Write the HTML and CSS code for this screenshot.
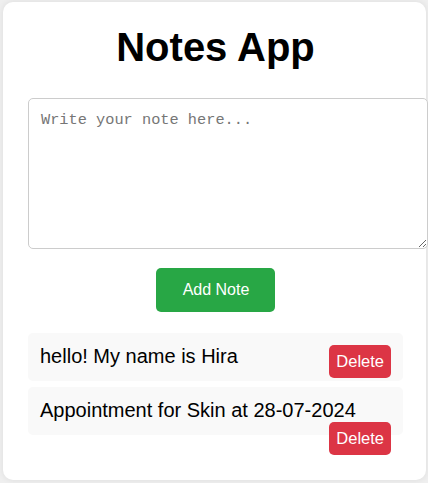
FILE: index.html
```html
<!DOCTYPE html>
<html lang="en">
<head>
<meta charset="utf-8">
<title>Notes App</title>
<link rel="stylesheet" href="styles.css">
</head>
<body>
<div class="container">
  <h1 class="title">Notes App</h1>
  <textarea class="note-input" placeholder="Write your note here..."></textarea>
  <div class="actions">
    <button class="add-btn">Add Note</button>
  </div>
  <div class="notes">
    <div class="note"><span class="note-text">hello! My name is Hira</span><button class="delete-btn">Delete</button></div>
    <div class="note"><span class="note-text">Appointment for Skin at 28-07-2024</span><button class="delete-btn">Delete</button></div>
  </div>
</div>
</body>
</html>
```

FILE: styles.css
```css
html, body {
  margin: 0;
  overflow: hidden;
}
body {
  background: #efefef;
  padding: 2px 2px 3px 3px;
  font-family: "Liberation Sans", Arial, sans-serif;
  color: #000;
}
.container {
  display: flow-root;
  background: #fff;
  border-radius: 10px;
  box-shadow: 0 0 6px rgba(0, 0, 0, 0.08);
  padding: 22px 23px 25px 25px;
}
.title {
  margin: 0 0 28px;
  text-align: center;
  font-size: 40px;
  line-height: 46px;
  font-weight: bold;
}
.note-input {
  display: block;
  box-sizing: border-box;
  width: 400px;
  height: 151px;
  margin: 0;
  padding: 12px;
  border: 1px solid #ccc;
  border-radius: 5px;
  font-family: "Liberation Mono", "DejaVu Sans Mono", monospace;
  font-size: 15.3px;
  resize: both;
}
.note-input::placeholder {
  color: #767676;
}
.actions {
  display: flex;
  justify-content: center;
  margin-top: 19px;
}
.add-btn {
  background: #28a745;
  color: #fff;
  border: none;
  border-radius: 5px;
  padding: 13px 26px 13px 27px;
  font-family: "Liberation Sans", Arial, sans-serif;
  font-size: 16px;
  line-height: 18px;
}
.notes {
  margin-top: 21px;
}
.note {
  background: #f9f9f9;
  border-radius: 5px;
  padding: 12px 12px 13px 12px;
  margin-bottom: 6px;
  font-size: 20px;
  line-height: 23px;
}
.delete-btn {
  float: right;
  background: #dc3545;
  color: #fff;
  border: none;
  border-radius: 5px;
  padding: 7px 7px;
  font-family: "Liberation Sans", Arial, sans-serif;
  font-size: 16.5px;
  line-height: 19px;
}
```
